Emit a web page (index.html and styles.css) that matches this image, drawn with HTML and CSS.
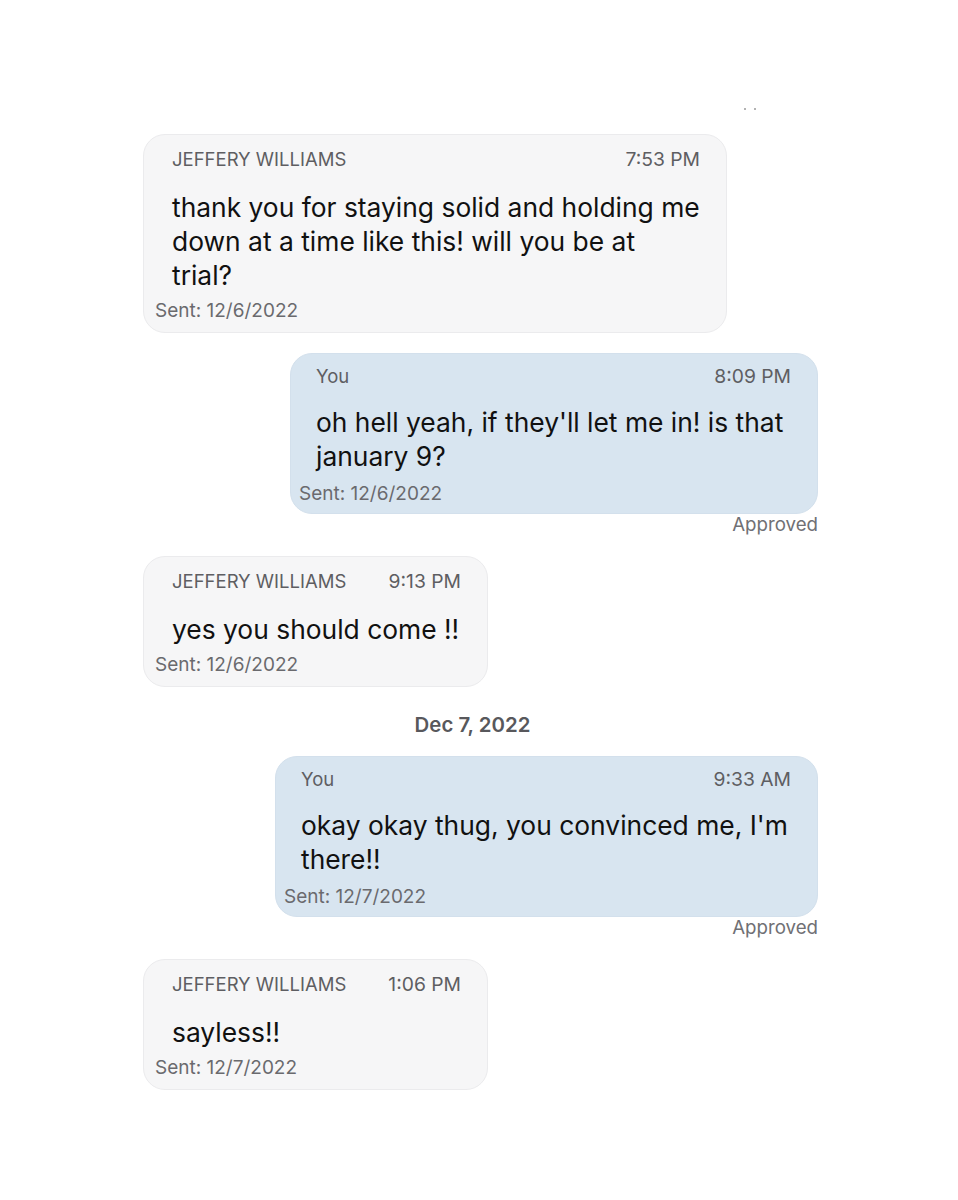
FILE: index.html
```html
<!DOCTYPE html>
<html lang="en">
  <head>
    <meta charset="UTF-8" />
    <meta name="viewport" content="width=device-width, initial-scale=1.0" />
    <title>Messages</title>
    <link rel="stylesheet" href="styles.css">
  </head>
  <body>
    <div class="thread">
      <div class="dots"><span></span><span></span></div>

      <div class="msg incoming">
        <div class="bubble w-584">
          <div class="head">
            <span class="name">JEFFERY WILLIAMS</span>
            <span class="time">7:53 PM</span>
          </div>
          <div class="text">thank you for staying solid and holding me down at a time like this! will you be at trial?</div>
          <div class="sent">Sent: 12/6/2022</div>
        </div>
      </div>

      <div class="msg outgoing">
        <div class="bubble w-528">
          <div class="head">
            <span class="name">You</span>
            <span class="time">8:09 PM</span>
          </div>
          <div class="text">oh hell yeah, if they'll let me in! is that january 9?</div>
          <div class="sent">Sent: 12/6/2022</div>
        </div>
        <div class="status">Approved</div>
      </div>

      <div class="msg incoming">
        <div class="bubble w-345">
          <div class="head">
            <span class="name">JEFFERY WILLIAMS</span>
            <span class="time">9:13 PM</span>
          </div>
          <div class="text">yes you should come !!</div>
          <div class="sent">Sent: 12/6/2022</div>
        </div>
      </div>

      <div class="day">Dec 7, 2022</div>

      <div class="msg outgoing">
        <div class="bubble w-543">
          <div class="head">
            <span class="name">You</span>
            <span class="time">9:33 AM</span>
          </div>
          <div class="text">okay okay thug, you convinced me, I'm there!!</div>
          <div class="sent">Sent: 12/7/2022</div>
        </div>
        <div class="status">Approved</div>
      </div>

      <div class="msg incoming">
        <div class="bubble w-345">
          <div class="head">
            <span class="name">JEFFERY WILLIAMS</span>
            <span class="time">1:06 PM</span>
          </div>
          <div class="text">sayless!!</div>
          <div class="sent">Sent: 12/7/2022</div>
        </div>
      </div>
    </div>
  </body>
</html>
```

FILE: styles.css
```css
body {
  margin: 0;
  background: #ffffff;
  font-family: Inter, "Liberation Sans", Arial, sans-serif;
  color: #111111;
}

.thread {
  width: 675px;
  margin-left: 143px;
  padding-top: 108px;
  display: flex;
  flex-direction: column;
  gap: 20px;
}

.dots {
  display: flex;
  justify-content: flex-end;
  gap: 8px;
  height: 6px;
  margin-right: 62px;
}

.dots span {
  width: 2px;
  height: 2px;
  border-radius: 50%;
  background: #9a9a9a;
}

.msg {
  display: flex;
  flex-direction: column;
}

.msg.incoming {
  align-items: flex-start;
}

.msg.outgoing {
  align-items: flex-end;
}

.bubble {
  box-sizing: border-box;
  border-radius: 22px;
  padding: 14px 26px 11px 11px;
}

.incoming .bubble {
  background: #f6f6f7;
  border: 1px solid #ebebed;
}

.outgoing .bubble {
  background: #d8e5f0;
  border: 1px solid #d3e0ec;
  padding: 12px 26px 9px 8px;
}

.w-584 { width: 584px; }
.w-528 { width: 528px; }
.w-543 { width: 543px; }
.w-345 { width: 345px; }

.head {
  display: flex;
  justify-content: space-between;
  align-items: baseline;
  padding-left: 17px;
  line-height: 20px;
  color: #5e5e62;
}

.name {
  font-size: 18.5px;
}

.time {
  font-size: 19.3px;
}

.text {
  padding-left: 17px;
  margin-top: 21px;
  font-size: 26.4px;
  line-height: 34px;
}

.outgoing .text {
  margin-top: 19px;
}

.sent {
  margin-top: 9px;
  font-size: 19px;
  line-height: 20px;
  color: #6a6a6e;
}

.outgoing .sent {
  margin-top: 11px;
}

.status {
  margin-top: 1px;
  margin-bottom: 1px;
  font-size: 18.7px;
  line-height: 20px;
  color: #707074;
}

.day {
  text-align: center;
  margin-right: 16px;
  margin-top: 7px;
  font-size: 20.4px;
  font-weight: 600;
  line-height: 22px;
  color: #58585c;
}
```
